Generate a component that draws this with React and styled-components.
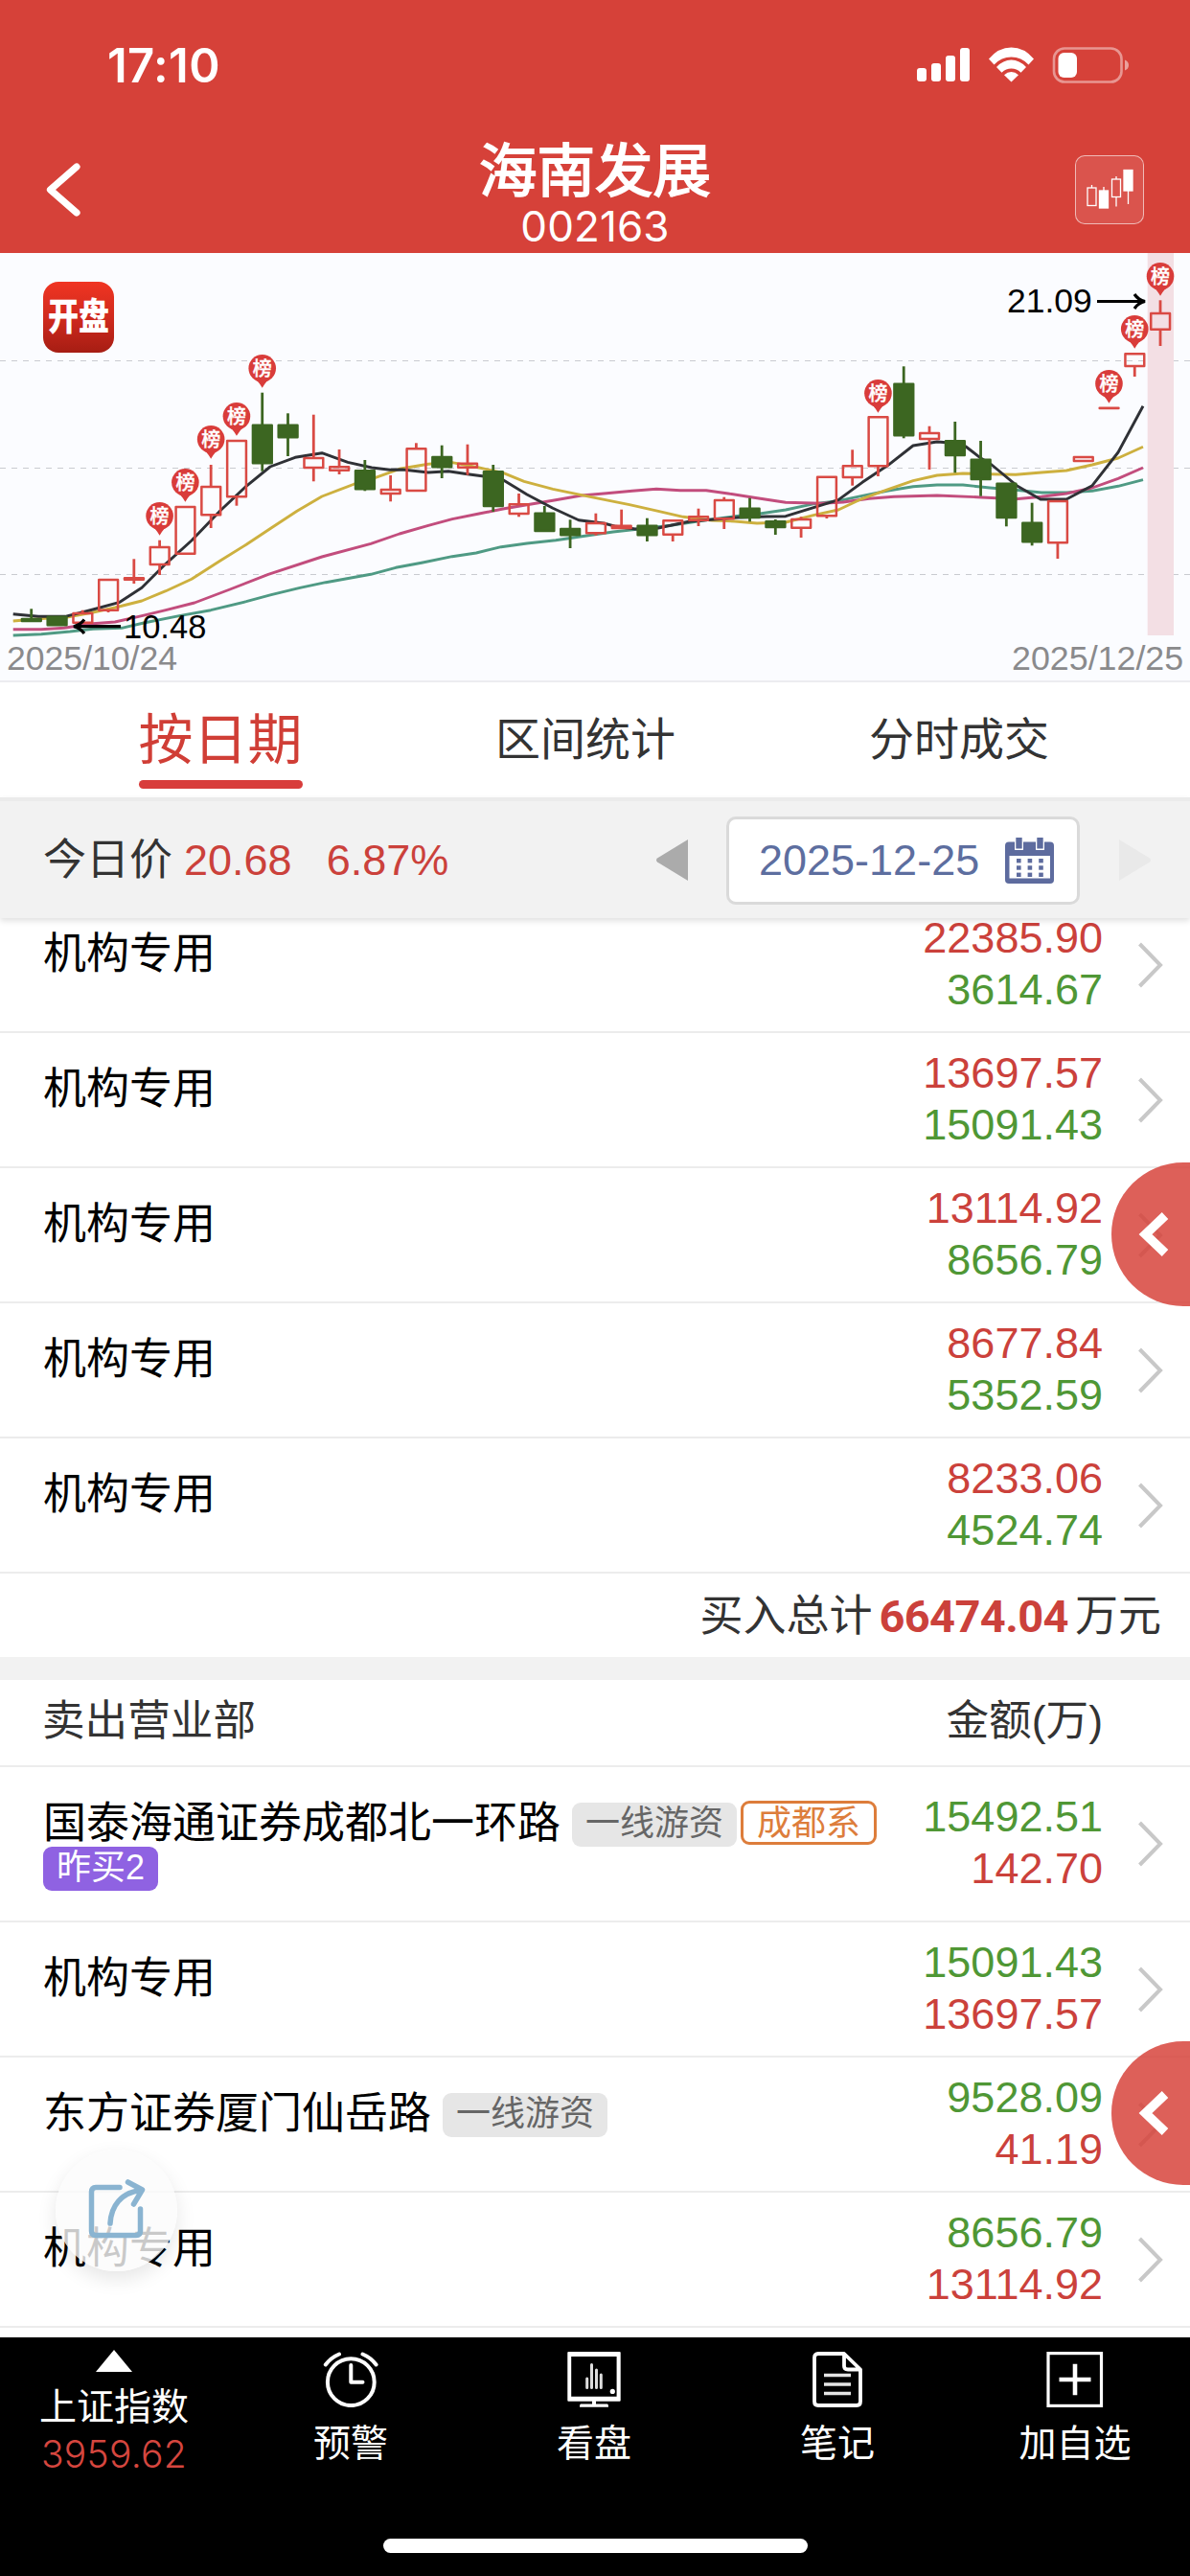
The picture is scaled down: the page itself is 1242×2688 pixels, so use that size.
import styled, { createGlobalStyle } from "styled-components";

const GlobalStyle = createGlobalStyle`
    * {
        box-sizing: border-box;
    }

    body {
        margin: 0;
        background: #fff;
        font-family: "Liberation Sans", "Noto Sans CJK SC", sans-serif;
    }
`;

const RED = '#d64139';
const UP = '#cb413b';
const DOWN = '#4f9735';

const Screen = styled.div`
    position: relative;
    display: flex;
    flex-direction: column;
    width: 1242px;
    height: 2688px;
    overflow: hidden;
    background: #fff;
`;

/* ---------- header ---------- */

const Header = styled.header`
    flex: none;
    height: 264px;
    background: ${RED};
    color: #fff;
`;

const StatusBar = styled.div`
    display: flex;
    align-items: center;
    justify-content: space-between;
    height: 132px;
    padding: 4px 64px 0 112px;
`;

const Clock = styled.span`
    font-family: Inter, sans-serif;
    font-size: 49px;
    font-weight: 600;
    line-height: 1;
    letter-spacing: 0.4px;
`;

const StatusIcons = styled.svg`
    display: block;
    width: 222px;
    height: 38px;
`;

const NavBar = styled.div`
    display: grid;
    grid-template-columns: 120px 1fr 120px;
    align-items: center;
    height: 132px;
`;

const BackIcon = styled.svg`
    width: 38px;
    height: 56px;
    margin-left: 47px;
`;

const TitleBlock = styled.div`
    display: flex;
    flex-direction: column;
    align-items: center;
    padding-top: 12px;
`;

const Title = styled.h1`
    margin: 0;
    padding-top: 3px;
    font-size: 60.5px;
    font-weight: 400;
    line-height: 61px;
    -webkit-text-stroke: 1.8px #fff;
`;

const StockCode = styled.span`
    font-family: Inter, sans-serif;
    font-size: 44px;
    font-weight: 400;
    line-height: 52px;
    letter-spacing: 0.1px;
`;

const ChartButton = styled.button`
    display: flex;
    width: 72px;
    height: 72px;
    padding: 0;
    border: 1px solid rgba(255, 255, 255, 0.6);
    border-radius: 10px;
    background: rgba(255, 255, 255, 0.1);
`;

/* ---------- chart ---------- */

const ChartPanel = styled.section`
    position: relative;
    flex: none;
    height: 448px;
    background: #fbfcff;
    border-bottom: 2px solid #ececf0;
`;

const ChartLogo = styled.div`
    position: absolute;
    left: 45px;
    top: 30px;
    width: 74px;
    height: 74px;
    border-radius: 16px;
    background: linear-gradient(#f03522, #d02a1e 50%, #a61d13);
    color: #fff;
    font-size: 32px;
    font-weight: 900;
    line-height: 74px;
    text-align: center;

    span {
        display: block;
        transform: scaleY(1.22);
    }
`;

/* ---------- tabs and filter ---------- */

const Tabs = styled.nav`
    display: grid;
    grid-template-columns: 460px 302px 1fr;
    flex: none;
    height: 120px;
`;

const Tab = styled.div`
    display: flex;
    flex-direction: column;
    align-items: center;
    padding-top: 21px;
    color: ${({ $active }) => ($active ? '#d03e36' : '#333')};
    font-size: ${({ $active }) => ($active ? 57 : 47)}px;
    line-height: 78px;

    &:last-child {
        margin-right: 2px;
    }

    &::after {
        content: "";
        display: ${({ $active }) => ($active ? 'block' : 'none')};
        width: 171px;
        height: 9px;
        margin-top: 3px;
        border-radius: 5px;
        background: #d83d3b;
    }
`;

const FilterBar = styled.div`
    position: relative;
    z-index: 1;
    display: flex;
    align-items: center;
    flex: none;
    height: 126px;
    padding: 1px 41px 0 45px;
    border-top: 4px solid #ebebeb;
    background: #f2f2f2;
    box-shadow: 0 3px 6px rgba(0, 0, 0, 0.12);
    font-size: 45px;
    line-height: 52px;
    color: #333;
`;

const Price = styled.span`
    margin-left: ${({ $gap }) => $gap}px;
    color: ${UP};
`;

const Arrow = styled.svg`
    width: 33px;
    height: 43px;
    margin-left: ${({ $push }) => ($push ? 'auto' : '41px')};
    fill: ${({ $push }) => ($push ? '#ababab' : '#e9e9e9')};
`;

const DateBox = styled.div`
    display: flex;
    align-items: center;
    justify-content: space-between;
    width: 369px;
    height: 92px;
    margin-left: 40px;
    padding: 0 24px 0 31px;
    border: 3px solid #dadada;
    border-radius: 10px;
    background: #fff;
    color: #5d6e9f;
`;

/* ---------- broker list ---------- */

const List = styled.div`
    flex: none;
    margin-top: -21px;
`;

const Row = styled.div`
    display: flex;
    align-items: center;
    height: ${({ $tall }) => ($tall ? 162 : 141)}px;
    padding: 0 27px 0 45px;
    border-bottom: 2px solid #ececec;
`;

const Broker = styled.div`
    display: flex;
    flex-wrap: wrap;
    align-items: center;
    align-self: flex-start;
    flex: 1;
    padding-top: 35px;
    font-size: 45px;
    line-height: 48px;
    color: #000;
`;

const Name = styled.span`
    margin-right: 12px;
`;

const tagColors = {
    gray: 'background: #e6e6e6; color: #666; margin-top: 2px;',
    orange: 'border: 3px solid #dd7d3b; color: #dd7d3b; margin: -3px 0 0 4px; padding: 0 14px;',
    purple: 'background: #8f62e2; color: #fff;',
};

const Tag = styled.span`
    height: 46px;
    padding: 0 14px;
    border-radius: 9px;
    font-size: 36px;
    line-height: 44px;
    ${({ $kind }) => tagColors[$kind]}
    ${({ $kind }) => $kind === 'orange' && 'line-height: 41px;'}
`;

const LineBreak = styled.span`
    flex-basis: 100%;
`;

const Amounts = styled.div`
    display: flex;
    flex-direction: column;
    align-items: flex-end;
    margin-top: -2px;
    font-size: 45px;
    line-height: 54px;
`;

const Amount = styled.span`
    color: ${({ $up }) => ($up ? UP : DOWN)};
`;

const RowChevron = styled.svg`
    width: 28px;
    height: 48px;
    margin-left: 36px;
`;

const TotalRow = styled.div`
    display: flex;
    justify-content: flex-end;
    height: 87px;
    padding-right: 30px;
    font-size: 45px;
    line-height: 90px;
    color: #333;
`;

const TotalValue = styled.strong`
    margin: 0 7px 0 7px;
    font-family: Roboto, sans-serif;
    font-size: 47px;
    letter-spacing: -0.6px;
    color: ${UP};
`;

const SectionGap = styled.div`
    height: 24px;
    background: #f2f2f2;
`;

const SectionHead = styled.div`
    display: flex;
    justify-content: space-between;
    height: 91px;
    padding: 0 91px 0 44px;
    border-bottom: 2px solid #ececec;
    font-size: 44.6px;
    line-height: 85px;
    color: #333;
`;

/* ---------- floating buttons ---------- */

const SideHandle = styled.div`
    position: absolute;
    top: ${({ $top }) => $top}px;
    left: 1160px;
    width: 82px;
    height: 150px;
    padding: 50px 0 0 28px;
    border-radius: 75px 0 0 75px;
    background: rgba(214, 65, 57, 0.84);
    z-index: 2;
`;

const ShareButton = styled.div`
    position: absolute;
    left: 58px;
    top: 2243px;
    display: flex;
    align-items: center;
    justify-content: center;
    width: 127px;
    height: 127px;
    padding-bottom: 6px;
    border-radius: 50%;
    background: rgba(251, 251, 251, 0.8);
    box-shadow: 0 8px 20px rgba(0, 0, 0, 0.1);
    z-index: 2;
`;

/* ---------- footer ---------- */

const Footer = styled.footer`
    position: absolute;
    left: 0;
    right: 0;
    bottom: 0;
    display: grid;
    grid-template-columns: 238px 256px 252px 256px 1fr;
    grid-template-rows: 210px 1fr;
    height: 249px;
    background: #000;
    color: #fff;
    font-size: 39px;
    z-index: 3;
`;

const FooterItem = styled.div`
    display: flex;
    flex-direction: column;
    align-items: center;
    padding-top: 15px;
    line-height: 46px;

    svg {
        margin-bottom: 15px;
    }
`;

const IndexItem = styled(FooterItem)`
    padding-top: 13px;
    line-height: 44px;
`;

const IndexValue = styled.span`
    margin-top: 5px;
    font-family: Inter, sans-serif;
    font-size: 39px;
    font-weight: 300;
    letter-spacing: 0.3px;
    color: #d5463f;
`;

const HomeIndicator = styled.div`
    grid-column: 1 / -1;
    justify-self: center;
    width: 443px;
    height: 15px;
    border-radius: 8px;
    background: #fff;
`;

// [up, high, body top, body bottom, low]
const candles = [
    [0, 371.3, 381, 385, 385],
    [0, 378.7, 378.7, 389.3, 389.3],
    [1, 372.7, 375, 386.7, 386.7],
    [1, 340, 340, 373.7, 375],
    [1, 319.3, 338.3, 341.7, 345],
    [1, 299.7, 306, 326, 336],
    [1, 264, 264, 314.7, 314.7],
    [1, 221, 243, 274.3, 287],
    [1, 195, 195, 255.3, 263.7],
    [0, 145.7, 178.7, 220.3, 227.7],
    [0, 167.3, 178.7, 193.3, 212],
    [1, 168.7, 213, 225, 238.3],
    [1, 205, 222.3, 227.7, 231],
    [0, 216, 226.3, 247.3, 248.3],
    [1, 232, 246, 252, 259.3],
    [1, 198.3, 203.3, 249, 249],
    [0, 200.7, 212, 224.3, 235],
    [1, 199.7, 218.7, 224.7, 231.7],
    [0, 221, 227.3, 265, 270],
    [1, 251, 261.3, 273, 275.3],
    [0, 264, 270.7, 291, 291],
    [0, 278.3, 287, 295.3, 308],
    [1, 271.7, 281, 293.3, 294.7],
    [1, 267.7, 283.7, 288, 288],
    [0, 276.7, 283.7, 295.3, 301],
    [1, 278.3, 278.3, 294.7, 301],
    [1, 266.7, 274.3, 279.7, 285],
    [1, 254.7, 257, 278.3, 288],
    [0, 255.7, 265.7, 277, 280.3],
    [0, 278, 279.3, 287, 294],
    [1, 275.3, 277, 287.7, 297],
    [1, 232.7, 232.7, 275.3, 277],
    [1, 205.3, 221.3, 235, 242.7],
    [1, 170.3, 170.3, 223.3, 233],
    [0, 118.3, 135.7, 191.3, 193.3],
    [1, 180.7, 187, 195, 226],
    [0, 176, 195.3, 212, 229.3],
    [0, 196, 214.7, 237, 253.7],
    [0, 239.7, 239.7, 277, 285.3],
    [0, 260.7, 280.7, 302.3, 305.3],
    [1, 258, 258, 303.3, 319],
    [1, 212, 212, 218, 218],
    [1, 160.7, 160.7, 163, 163],
    [1, 104.3, 104.3, 119, 129],
    [1, 49.3, 62, 80.7, 97],
];

// candle index and centre of the pin head
const pins = [
    [5, 274.3], [6, 239.3], [7, 194.3], [8, 170.3], [9, 120.3],
    [33, 146.3], [42, 136.3], [43, 79.3], [44, 24.3],
];

const averages = [
    { color: '#4f9a84', points: '13.7,399 43,397.7 73,395 97,392.3 127,391.3 150,386 187,378.7 220,372.7 257,363.7 283,356.7 313,349.3 340,343.7 387,335.3 413,328.3 440,323.3 472,316.7 497,313 523,306.7 550,303 580,299.7 607,295.7 640,291 667,288 700,284.3 733,279.3 767,274.7 793,272 820,268 850,261.7 875,258.7 900,253.3 927,248 953,243.7 978,242 1005,242 1033,245 1060,247.3 1087,250 1113,250 1140,248.3 1167,243.3 1193,236.7' },
    { color: '#c24d7d', points: '13.7,392.7 43,392.7 67,391.3 97,386.7 120,385 148,378.7 173,372.7 203,365 240,351 280,335.3 336,317 387,303.3 417,293 447,284.3 472,277.7 500,272 525,267 550,262.7 577,258.3 607,253 633,250.7 660,248.3 685,246.3 710,247.7 737,247.7 760,251 787,255.3 820,260.3 857,261.3 880,260 907,256.3 933,254.3 978,253 1020,254.7 1060,256.7 1087,254.3 1113,251 1140,245 1167,235.3 1193,224' },
    { color: '#cdb03f', points: '13.7,384 50,381 70,380 97,375 120,370 148,363 173,352.7 200,340.3 230,321 257,304.3 283,287 310,269.3 336,254 370,241 392,234.3 417,225.3 447,220.3 472,218.7 500,224 525,229.3 547,238.3 577,246.3 617,254.7 657,262.7 687,269.3 713,275.3 743,279 767,280 790,282 820,281 850,273.3 875,268 900,256.3 927,246.7 953,237.7 978,232 1005,230 1033,230.7 1060,231.3 1087,229 1113,227 1140,221 1167,214 1193,202.3' },
    { color: '#2f3136', points: '13.7,376.7 40,379.3 68,379.3 97,372 125,364.3 148,349.3 173,324.3 200,300 230,268.7 257,243.3 282,223 308,213.3 336,208.7 363,218.3 388,224 407,226.3 420,226 447,229 468,227.7 488,230.7 505,233 525,236.7 550,252 577,266.3 604,278.7 630,282 643,285.3 663,288 687,287 720,280 770,276 800,275 820,274.7 850,265.3 875,257.7 900,239.3 927,221.3 953,201 978,197 988,197.7 1008,202 1024,214.3 1035,221 1062,243.3 1086,257 1113,257 1140,242.7 1167,208 1193,159.7' },
];

const candleX = (index) => 32.7 + index * 26.78;

const Candle = ({ index, data }) => {
    const [up, high, top, bottom, low] = data;
    const x = candleX(index);
    const color = up ? '#d94a44' : '#3c6621';
    const height = Math.max(bottom - top - 2, 0.4);

    return (
        <g stroke={color} strokeWidth="2.5" strokeLinejoin="round">
            {high < top && <line x1={x} x2={x} y1={high} y2={top + 1} strokeWidth="2.8" />}
            {low > bottom && <line x1={x} x2={x} y1={bottom - 1} y2={low} strokeWidth="2.8" />}
            <rect x={x - 9.8} y={top + 1} width="19.8" height={height} fill={up ? 'none' : color} />
        </g>
    );
};

const Pin = ({ x, y }) => (
    <g>
        <path d={`M${x - 12.5} ${y + 7} Q${x - 4} ${y + 13} ${x} ${y + 20.5} Q${x + 4} ${y + 13} ${x + 12.5} ${y + 7}Z`} fill="#d93c3a" />
        <circle cx={x} cy={y} r="14.3" fill="#d93c3a" />
        <text x={x} y={y + 7.6} fontSize="20" fontWeight="500" fill="#fff" stroke="#fff" strokeWidth="0.4" textAnchor="middle">榜</text>
    </g>
);

const KlineChart = () => (
    <ChartPanel>
        <svg width="1242" height="446" viewBox="0 0 1242 446">
            {[112.5, 224.5, 335.5].map((y) => (
                <line key={y} x1="0" x2="1242" y1={y} y2={y} stroke="#c9cbd0" strokeDasharray="6 6" />
            ))}
            <rect x="1197.7" y="0" width="27.3" height="399" fill="#f3dfe4" />
            {averages.map((line) => (
                <polyline key={line.color} points={line.points} fill="none" stroke={line.color} strokeWidth="2.9" strokeLinejoin="round" />
            ))}
            {candles.map((data, index) => (
                <Candle key={index} index={index} data={data} />
            ))}
            {pins.map(([index, y]) => (
                <Pin key={index} x={candleX(index)} y={y} />
            ))}
            <path d="M126 389.7H78M88 382.5Q84 388 77 389.7Q84 391.5 88 397" fill="none" stroke="#000" strokeWidth="3.2" />
            <path d="M1145 50.5H1194M1184 43Q1188 49 1195 50.5Q1188 52 1184 58" fill="none" stroke="#000" strokeWidth="3.2" />
            <text x="129" y="401.7" fontSize="34.5" fill="#000">10.48</text>
            <text x="1051" y="61.7" fontSize="35.5" fill="#000">21.09</text>
            <text x="7" y="434.5" fontSize="35.6" fill="#8a8a8c">2025/10/24</text>
            <text x="1056" y="434.5" fontSize="35.8" fill="#8a8a8c">2025/12/25</text>
        </svg>
        <ChartLogo><span>开盘</span></ChartLogo>
    </ChartPanel>
);

const CalendarIcon = () => (
    <svg width="51" height="48" viewBox="0 0 51 48">
        <rect x="0" y="4.5" width="51" height="43.5" rx="4" fill="#5d6b9e" />
        <rect x="4.5" y="19" width="42.5" height="23.5" fill="#fff" />
        <rect x="10" y="0" width="9" height="13" fill="#fff" />
        <rect x="32" y="0" width="9" height="13" fill="#fff" />
        <rect x="11.3" y="0" width="6.4" height="11.5" fill="#5d6b9e" />
        <rect x="33.3" y="0" width="6.4" height="11.5" fill="#5d6b9e" />
        {[22, 29.3, 36.6].map((y) => [12, 23.6, 35.2].map((x) => (
            <rect key={`${x}-${y}`} x={x} y={y} width="4.6" height="4.4" fill="#5d6b9e" />
        )))}
    </svg>
);

const brokersBuy = [
    { name: '机构专用', amounts: ['22385.90', '3614.67'] },
    { name: '机构专用', amounts: ['13697.57', '15091.43'] },
    { name: '机构专用', amounts: ['13114.92', '8656.79'] },
    { name: '机构专用', amounts: ['8677.84', '5352.59'] },
    { name: '机构专用', amounts: ['8233.06', '4524.74'] },
];

const brokersSell = [
    {
        name: '国泰海通证券成都北一环路',
        tags: [['gray', '一线游资'], ['orange', '成都系']],
        extra: '昨买2',
        amounts: ['15492.51', '142.70'],
    },
    { name: '机构专用', amounts: ['15091.43', '13697.57'] },
    { name: '东方证券厦门仙岳路', tags: [['gray', '一线游资']], amounts: ['9528.09', '41.19'] },
    { name: '机构专用', amounts: ['8656.79', '13114.92'] },
];

const BrokerRow = ({ broker, buy }) => (
    <Row $tall={Boolean(broker.extra)}>
        <Broker>
            <Name>{broker.name}</Name>
            {broker.tags?.map(([kind, label]) => (
                <Tag key={label} $kind={kind}>{label}</Tag>
            ))}
            {broker.extra && (
                <>
                    <LineBreak />
                    <Tag $kind="purple">{broker.extra}</Tag>
                </>
            )}
        </Broker>
        <Amounts>
            <Amount $up={buy}>{broker.amounts[0]}</Amount>
            <Amount $up={!buy}>{broker.amounts[1]}</Amount>
        </Amounts>
        <RowChevron viewBox="0 0 28 48">
            <path d="M2.5 2 24 24 2.5 46" fill="none" stroke="#c8c8c8" strokeWidth="4" />
        </RowChevron>
    </Row>
);

const HandleIcon = () => (
    <svg width="34" height="50" viewBox="0 0 34 50">
        <path d="M28 5.5 7.5 25 28 44.5" fill="none" stroke="#fff" strokeWidth="9.5" />
    </svg>
);

const AlarmIcon = () => (
    <svg width="58" height="58" viewBox="0 0 58 58" fill="none" stroke="#fff" strokeWidth="4" strokeLinecap="round" strokeLinejoin="round">
        <circle cx="29.3" cy="31.7" r="24.4" />
        <path d="M29.3 14V31.7H41.5M2.8 13.5Q8.5 6 17 2.5M41.5 2.5Q50 6 55.6 13.5" />
    </svg>
);

const MonitorIcon = () => (
    <svg width="58" height="58" viewBox="0 0 58 58">
        <path fill="#fff" fillRule="evenodd" d="M2.3 0H55.7Q56.7 0 56.7 1V50.5Q56.7 51.7 55.7 51.7H31V54.6H43Q44 54.6 44 57.8H14Q14 54.6 15 54.6H27V51.7H2.3Q1.3 51.7 1.3 50.5V1Q1.3 0 2.3 0ZM5.2 5V46.8H52.6V5Z" />
        <path d="M21.7 28V37.5M26.5 13.5V37.5M31.5 19V37.5M36.3 24V37.5" stroke="#ddd" strokeWidth="3" strokeLinecap="round" />
        <circle cx="48.3" cy="41.4" r="2.6" fill="#fff" />
    </svg>
);

const NoteIcon = () => (
    <svg width="52" height="58" viewBox="0 0 52 58" fill="none" stroke="#fff" strokeWidth="3.8" strokeLinejoin="round">
        <path d="M33 2H6Q2 2 2 6V52Q2 56 6 56H46Q50 56 50 52V18.5ZM33 2V15Q33 18.5 37 18.5H50" />
        <path d="M12 24.5H40M12 34H40M12 43.5H40" stroke="#e4e4e4" strokeWidth="3.4" />
    </svg>
);

const AddIcon = () => (
    <svg width="60" height="58" viewBox="0 0 60 58" fill="none" stroke="#fff">
        <rect x="2" y="1.6" width="55.5" height="54.8" strokeWidth="3.2" />
        <path d="M13.5 29H46.5M30 12.8V45.2" strokeWidth="4.6" />
    </svg>
);

const footerItems = [
    { label: '预警', icon: <AlarmIcon /> },
    { label: '看盘', icon: <MonitorIcon /> },
    { label: '笔记', icon: <NoteIcon /> },
    { label: '加自选', icon: <AddIcon /> },
];

const App = () => {
    return (
        <Screen>
            <GlobalStyle />
            <Header>
                <StatusBar>
                    <Clock>17:10</Clock>
                    <StatusIcons viewBox="0 0 222 38">
                        <g fill="#fff">
                            <rect x="1" y="22" width="10" height="14" rx="3" />
                            <rect x="16" y="17" width="10" height="19" rx="3" />
                            <rect x="31" y="9" width="10" height="27" rx="3" />
                            <rect x="46" y="1" width="10" height="35" rx="3" />
                            <path d="M76 12.5Q86 .5 99.5 .5T123 12.5L117.5 18.5Q110 10.5 99.5 10.5T81.5 18.5Z" />
                            <path d="M84 21Q91 13.5 99.5 13.5T115 21L109.5 26.7Q105 22.5 99.5 22.5T89.5 26.7Z" />
                            <path d="M92 29.3Q95.5 26 99.5 26T107 29.3L99.5 36.5Z" />
                            <rect x="148.5" y="6" width="19.5" height="26" rx="6" />
                            <path d="M218 13.5Q222 15 222 19T218 24.5Z" opacity=".5" />
                        </g>
                        <rect x="144" y="1.5" width="70.5" height="35" rx="11" fill="none" stroke="#fff" strokeWidth="2.6" opacity=".45" />
                    </StatusIcons>
                </StatusBar>
                <NavBar>
                    <BackIcon viewBox="0 0 38 56">
                        <path d="M33 4 5.5 28 33 52" fill="none" stroke="#fff" strokeWidth="7.2" strokeLinecap="round" strokeLinejoin="round" />
                    </BackIcon>
                    <TitleBlock>
                        <Title>海南发展</Title>
                        <StockCode>002163</StockCode>
                    </TitleBlock>
                    <ChartButton>
                        <svg width="70" height="70" viewBox="0 0 70 70" stroke="#fff" strokeWidth="1.3" fill="none">
                            <path d="M16.5 30V33M29 32V36M42 21V24M42 42.5V52.5M54.5 36V50" />
                            <rect x="12" y="33" width="9" height="18.5" />
                            <rect x="24.5" y="36" width="9" height="18" fill="#fff" />
                            <rect x="37.5" y="24" width="9" height="18.5" />
                            <rect x="50" y="14.5" width="9" height="21.5" fill="#fff" />
                        </svg>
                    </ChartButton>
                </NavBar>
            </Header>
            <KlineChart />
            <Tabs>
                <Tab $active>按日期</Tab>
                <Tab>区间统计</Tab>
                <Tab>分时成交</Tab>
            </Tabs>
            <FilterBar>
                今日价
                <Price $gap={12}>20.68</Price>
                <Price $gap={36}>6.87%</Price>
                <Arrow $push viewBox="0 0 33 43"><path d="M33 0V43L1 23.5Q-1 21.5 1 19.5Z" /></Arrow>
                <DateBox>
                    2025-12-25
                    <CalendarIcon />
                </DateBox>
                <Arrow viewBox="0 0 33 43"><path d="M0 0V43L32 23.5Q34 21.5 32 19.5Z" /></Arrow>
            </FilterBar>
            <List>
                {brokersBuy.map((broker, index) => (
                    <BrokerRow key={index} broker={broker} buy />
                ))}
                <TotalRow>
                    买入总计
                    <TotalValue>66474.04</TotalValue>
                    万元
                </TotalRow>
                <SectionGap />
                <SectionHead>
                    <span>卖出营业部</span>
                    <span>金额(万)</span>
                </SectionHead>
                {brokersSell.map((broker, index) => (
                    <BrokerRow key={index} broker={broker} buy={false} />
                ))}
            </List>
            <SideHandle $top={1213}><HandleIcon /></SideHandle>
            <SideHandle $top={2130}><HandleIcon /></SideHandle>
            <ShareButton>
                <svg width="62" height="64" viewBox="0 0 62 64" fill="none" stroke="#8ab4d1" strokeWidth="5.5" strokeLinecap="round" strokeLinejoin="round">
                    <path d="M34 10.5H9Q4.5 10.5 4.5 15V56Q4.5 60.5 9 60.5H51Q55.5 60.5 55.5 56V33" />
                    <path d="M24 48C25 30 35 16 56 13.5M42.5 5 57.500 13 48.500 28" />
                </svg>
            </ShareButton>
            <Footer>
                <IndexItem>
                    <svg width="38" height="23" viewBox="0 0 38 23"><path d="M19 0 38 23H0Z" fill="#fff" /></svg>
                    <span>上证指数</span>
                    <IndexValue>3959.62</IndexValue>
                </IndexItem>
                {footerItems.map((item) => (
                    <FooterItem key={item.label}>
                        {item.icon}
                        <span>{item.label}</span>
                    </FooterItem>
                ))}
                <HomeIndicator />
            </Footer>
        </Screen>
    );
};

export default App;
